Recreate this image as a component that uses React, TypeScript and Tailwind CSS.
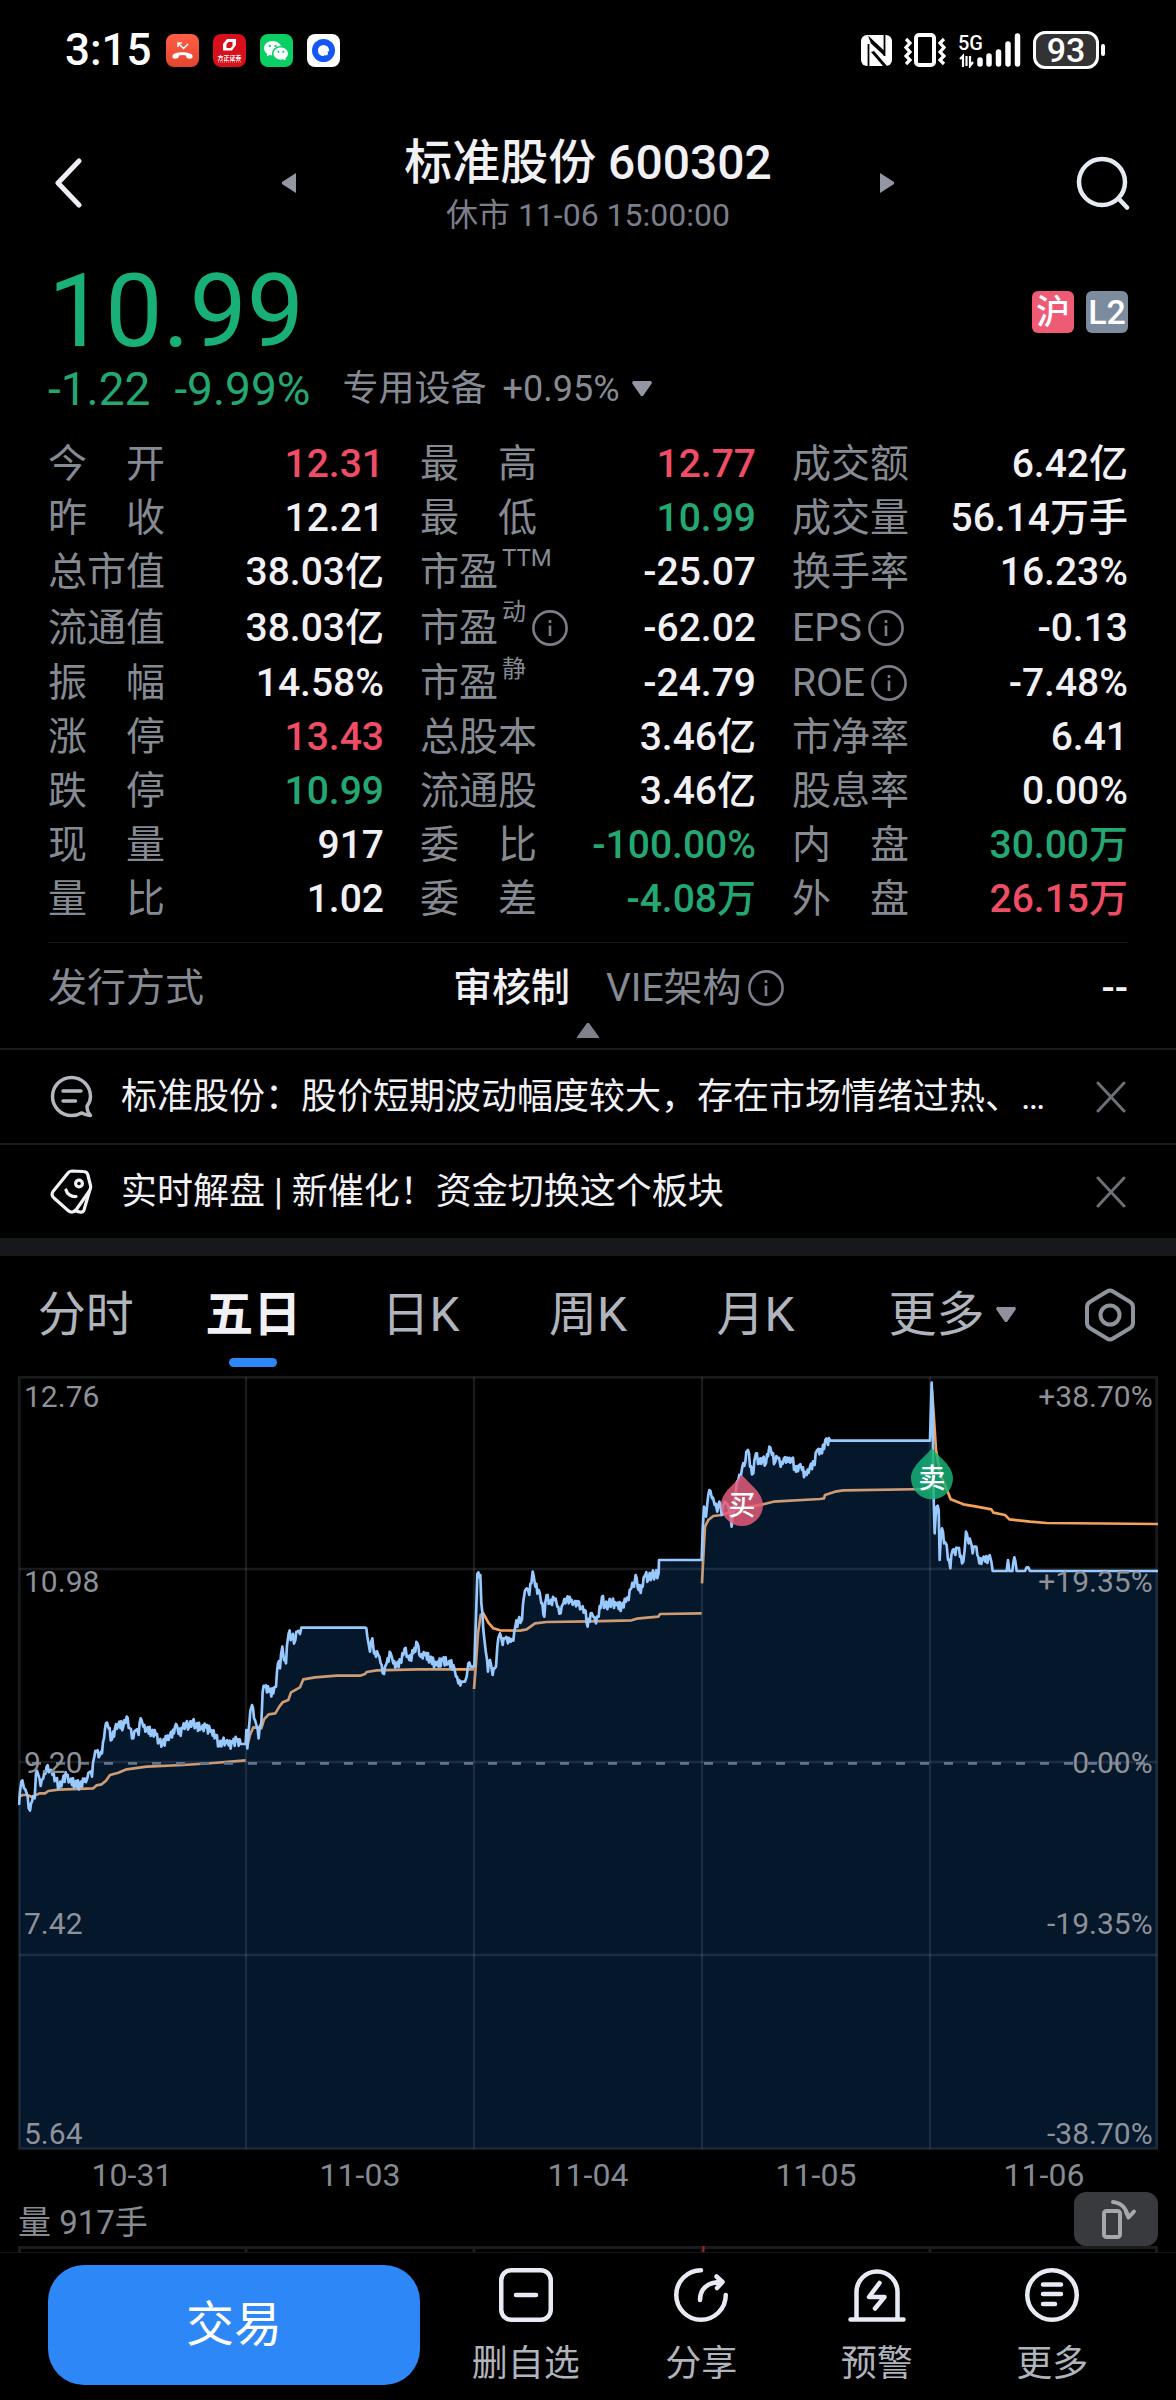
import type { ReactNode } from 'react';
import { BsWechat } from 'react-icons/bs';

type Tone = 'plain' | 'up' | 'down';

interface Quote {
  label: string;
  value: string;
  tone?: Tone;
  sup?: string;
  info?: boolean;
}

const toneClass: Record<Tone, string> = {
  plain: 'text-[#f0f0f5]',
  up: 'text-[#ee4d65]',
  down: 'text-[#24a873]',
};

// Three quotes per row
const quoteRows: Quote[][] = [
  [
    { label: '今　开', value: '12.31', tone: 'up' },
    { label: '最　高', value: '12.77', tone: 'up' },
    { label: '成交额', value: '6.42亿' },
  ],
  [
    { label: '昨　收', value: '12.21' },
    { label: '最　低', value: '10.99', tone: 'down' },
    { label: '成交量', value: '56.14万手' },
  ],
  [
    { label: '总市值', value: '38.03亿' },
    { label: '市盈', sup: 'TTM', value: '-25.07' },
    { label: '换手率', value: '16.23%' },
  ],
  [
    { label: '流通值', value: '38.03亿' },
    { label: '市盈', sup: '动', info: true, value: '-62.02' },
    { label: 'EPS', info: true, value: '-0.13' },
  ],
  [
    { label: '振　幅', value: '14.58%' },
    { label: '市盈', sup: '静', value: '-24.79' },
    { label: 'ROE', info: true, value: '-7.48%' },
  ],
  [
    { label: '涨　停', value: '13.43', tone: 'up' },
    { label: '总股本', value: '3.46亿' },
    { label: '市净率', value: '6.41' },
  ],
  [
    { label: '跌　停', value: '10.99', tone: 'down' },
    { label: '流通股', value: '3.46亿' },
    { label: '股息率', value: '0.00%' },
  ],
  [
    { label: '现　量', value: '917' },
    { label: '委　比', value: '-100.00%', tone: 'down' },
    { label: '内　盘', value: '30.00万', tone: 'down' },
  ],
  [
    { label: '量　比', value: '1.02' },
    { label: '委　差', value: '-4.08万', tone: 'down' },
    { label: '外　盘', value: '26.15万', tone: 'up' },
  ],
];

type Point = [number, number];

interface Segment {
  offset: number;
  points: Point[];
}

// Chart units: three per pixel at full width
const priceSegments: Segment[] = [
  {
    offset: 0,
    points: [
      [57, 1305], [64, 1235], [72, 1255], [80, 1270], [90, 1322], [96, 1295], [104, 1285], [108, 1210], [115, 1215],
      [122, 1248], [130, 1225], [140, 1190], [150, 1200], [158, 1215], [168, 1225], [178, 1252], [188, 1230], [200, 1218],
      [210, 1232], [225, 1240], [240, 1245], [252, 1235], [262, 1225], [270, 1205], [276, 1220], [283, 1160], [290, 1145],
      [300, 1155], [306, 1150], [312, 1105], [318, 1060], [326, 1075], [336, 1108], [345, 1075], [355, 1062], [370, 1068],
      [380, 1040], [390, 1075], [400, 1105], [408, 1080], [416, 1095], [422, 1045], [430, 1070], [440, 1078], [455, 1085],
      [468, 1095], [478, 1115], [488, 1120], [500, 1110], [510, 1095], [522, 1090], [528, 1062], [536, 1092], [548, 1075],
      [558, 1060], [568, 1070], [578, 1052], [588, 1068], [605, 1075], [618, 1072], [632, 1085], [648, 1095], [658, 1128],
      [668, 1112], [678, 1115], [686, 1126], [698, 1118], [710, 1113], [722, 1122], [737, 1122], [739, 1080], [742, 1135],
      [748, 1060], [756, 1005], [762, 1045], [770, 1068], [776, 1105], [784, 1060], [788, 965], [795, 950], [808, 965],
      [820, 970], [828, 950], [834, 880], [840, 895], [847, 830], [852, 870], [858, 880], [866, 790], [876, 800],
      [886, 810], [892, 785], [900, 792], [904, 773], [1096, 773], [1102, 800], [1110, 845], [1117, 805], [1122, 850],
      [1135, 855], [1142, 880], [1152, 912], [1160, 880], [1172, 850], [1180, 880], [1190, 885], [1204, 878], [1214, 835],
      [1220, 860], [1228, 870], [1240, 850], [1252, 820], [1262, 860], [1275, 855], [1290, 865], [1310, 885], [1328, 870],
      [1345, 880], [1360, 885], [1368, 920], [1375, 940], [1385, 935], [1395, 935], [1400, 920], [1405, 880], [1412, 890],
      [1422, 890],
    ],
  },
  {
    offset: 1320,
    points: [
      [103, 885], [108, 740], [112, 612], [121, 615], [124, 700], [130, 780], [138, 850], [144, 905], [150, 870],
      [158, 915], [164, 895], [168, 890], [172, 830], [180, 790], [188, 825], [196, 805], [204, 820], [212, 815],
      [220, 812], [226, 770], [235, 750], [246, 748], [252, 680], [260, 655], [268, 675], [278, 605], [286, 650],
      [296, 660], [304, 700], [313, 740], [320, 675], [330, 700], [344, 690], [352, 710], [362, 730], [370, 700],
      [380, 685], [392, 695], [402, 697], [414, 705], [425, 715], [434, 720], [443, 770], [452, 730], [460, 740],
      [468, 760], [476, 740], [486, 680], [496, 710], [506, 700], [516, 695], [530, 705], [545, 710], [558, 695],
      [566, 690], [574, 655], [582, 650], [587, 615], [596, 660], [608, 650], [616, 615], [626, 625], [636, 612],
      [646, 615], [656, 608], [657, 570], [785, 570], [788, 480], [792, 410], [798, 440], [802, 400], [808, 360],
      [816, 385], [824, 405], [832, 425], [838, 395], [845, 435], [852, 400], [860, 402], [868, 420], [875, 470],
      [882, 420], [888, 360], [895, 330], [903, 315], [907, 290], [916, 275], [924, 240], [930, 290], [940, 310],
      [948, 250], [958, 280], [968, 265], [978, 280], [988, 230], [996, 255], [1006, 275], [1014, 265], [1022, 290],
      [1032, 265], [1045, 275], [1056, 265], [1068, 305], [1078, 285], [1086, 300], [1100, 315], [1110, 290], [1124, 285],
      [1132, 240], [1146, 250], [1156, 210], [1164, 225], [1170, 212], [1470, 212],
    ],
  },
  {
    offset: 2340,
    points: [
      [455, 38], [458, 120], [460, 350], [464, 490], [470, 410], [476, 420], [479, 570], [486, 475], [492, 520],
      [500, 525], [504, 570], [511, 595], [518, 540], [526, 555], [534, 535], [540, 560], [550, 575], [554, 540],
      [558, 485], [566, 520], [572, 515], [578, 550], [586, 530], [592, 555], [598, 580], [608, 565], [616, 575],
      [626, 560], [634, 575], [638, 603], [680, 603], [684, 570], [688, 603], [697, 603], [703, 562], [710, 603],
      [735, 603], [740, 592], [745, 592], [750, 603], [1134, 603],
    ],
  },
];

const averageSegments: Segment[] = [
  {
    offset: 0,
    points: [
      [57, 1280], [68, 1275], [82, 1275], [98, 1282], [108, 1275], [120, 1270], [135, 1270], [145, 1263], [175, 1259],
      [280, 1255], [290, 1246], [305, 1243], [318, 1232], [330, 1215], [355, 1208], [380, 1198], [440, 1190], [550, 1185],
      [640, 1179], [737, 1171],
    ],
  },
  {
    offset: 0,
    points: [
      [742, 1128], [750, 1095], [760, 1072], [784, 1075], [792, 1048], [806, 1033], [826, 1030], [838, 1010], [848, 997],
      [865, 990], [873, 967], [900, 952], [910, 928], [945, 922], [1010, 917], [1080, 917], [1095, 912], [1100, 906],
      [1130, 901], [1250, 898], [1422, 898],
    ],
  },
  {
    offset: 1320,
    points: [
      [102, 957], [108, 880], [114, 790], [122, 735], [130, 730], [145, 758], [160, 775], [180, 781], [240, 782],
      [260, 778], [285, 760], [320, 756], [450, 754], [575, 751], [590, 746], [655, 740], [660, 732], [785, 730],
    ],
  },
  {
    offset: 1320,
    points: [
      [786, 640], [790, 560], [795, 470], [805, 450], [820, 438], [845, 435], [905, 415], [970, 403], [1000, 395],
      [1140, 387], [1152, 385], [1155, 375], [1185, 365], [1210, 361], [1470, 357],
    ],
  },
  {
    offset: 2340,
    points: [
      [456, 60], [461, 130], [468, 240], [480, 310], [503, 365], [512, 388], [550, 403], [590, 410], [634, 418],
      [640, 428], [675, 435], [688, 448], [750, 455], [800, 459], [1134, 462],
    ],
  },
];

function shift({ offset, points }: Segment): Point[] {
  return points.map(([x, y]) => [x + offset, y]);
}

function toPath(points: Point[]) {
  return points.map(([x, y], i) => `${i === 0 ? 'M' : 'L'}${x} ${y}`).join(' ');
}

function withTicks(points: Point[]): Point[] {
  const result: Point[] = [];
  points.forEach((point, i) => {
    const prev = points[i - 1];
    if (prev && prev[1] !== point[1] && point[0] - prev[0] > 5) {
      const steps = Math.floor((point[0] - prev[0]) / 3);
      for (let s = 1; s < steps; s++) {
        const x = prev[0] + s * 3;
        const y = prev[1] + ((point[1] - prev[1]) * s) / steps;
        const swing = 6 + (Math.round(x * 7) % 5) * 2;
        result.push([x, Math.min(y + (s % 2 === 0 ? swing : -swing), 1330)]);
      }
    }
    result.push(point);
  });
  return result;
}

const priceLine = toPath(withTicks(priceSegments.flatMap(shift)));

const priceLabels = [
  { price: '12.76', percent: '+38.70%', y: 111 },
  { price: '10.98', percent: '+19.35%', y: 666 },
  { price: '9.20', percent: '0.00%', y: 1208 },
  { price: '7.42', percent: '-19.35%', y: 1692 },
  { price: '5.64', percent: '-38.70%', y: 2322 },
];

function InfoIcon() {
  return (
    <svg viewBox="0 0 36 36" className="ml-[6px] h-9 w-9 shrink-0" fill="none" stroke="#7b7e88" strokeWidth="2.6">
      <circle cx="18" cy="18" r="16.6" />
      <path d="M18 15.5V26" />
      <path d="M18 10v3" />
    </svg>
  );
}

function StatusBar() {
  return (
    <div className="flex h-[100px] items-center justify-between pl-[65px] pr-[71px]">
      <div className="flex items-center gap-[14px]">
        <span className="text-[44px] font-medium leading-[48px] text-white">3:15</span>
        <svg viewBox="0 0 33 33" className="h-[33px] w-[33px]">
          <defs>
            <linearGradient id="call" x1="0" y1="0" x2="0" y2="1">
              <stop offset="0" stopColor="#ff5f45" />
              <stop offset="1" stopColor="#e2452d" />
            </linearGradient>
          </defs>
          <rect width="33" height="33" rx="8" fill="url(#call)" />
          <path d="M6.5 22c0-5 20-5 20 0v1.6c0 1.6-5.6 1.4-6 0l-.4-2c-2-.8-5.2-.8-7.2 0l-.4 2c-.4 1.4-6 1.6-6 0z" fill="#fff" />
          <path d="M12 13V9h4M12.5 9.5l5 5 4.5-4.5" fill="none" stroke="#fff" strokeWidth="1.5" />
        </svg>
        <svg viewBox="0 0 33 33" className="h-[33px] w-[33px]">
          <rect width="33" height="33" rx="8" fill="#d7101c" />
          <path d="M14 5h9v6l-4 5.5h-9V10z" fill="#fff" />
          <path d="M15.500 8h4v4l-2 2h-4v-4z" fill="#d7101c" />
          <text x="16.5" y="25.5" textAnchor="middle" fontSize="6" fontWeight="700" fill="#fff">方正证券</text>
          <path d="M5 28h23" stroke="#fff" strokeWidth="1" strokeDasharray="1 1" opacity=".7" />
        </svg>
        <span className="flex h-[33px] w-[33px] items-center justify-center rounded-lg bg-[#09cf64] text-white">
          <BsWechat className="h-6 w-6" />
        </span>
        <svg viewBox="0 0 33 33" className="h-[33px] w-[33px]">
          <rect width="33" height="33" rx="8" fill="#fff" />
          <circle cx="16.5" cy="16.5" r="11.5" fill="#1557f5" />
          <circle cx="16.5" cy="16.5" r="5.6" fill="#fff" />
          <path d="M17 17.5h5.500V22H17z" fill="#1557f5" />
          <circle cx="18.5" cy="19" r="2.5" fill="#fff" />
        </svg>
      </div>
      <div className="flex items-center gap-3">
        <svg viewBox="0 0 31 33" className="h-[33px] w-[31px]">
          <rect x="0" y="1" width="31" height="31" rx="6" fill="#fff" />
          <path d="M7.5 10v22M23.5 1v21" stroke="#000" strokeWidth="1.8" />
          <path d="M7 1.500L23.500 17v5L10 9.500zM10 18l3-1 13 15h-4z" fill="#000" />
        </svg>
        <svg viewBox="0 0 42 34" className="h-[34px] w-[42px]" fill="none" stroke="#fff">
          <rect x="12" y="2" width="18" height="30" rx="3" strokeWidth="4" />
          <path d="M2 6l4 4-4 4.500 4 4.500-4 4 4 4-4 4M40 6l-4 4 4 4.500-4 4.500 4 4-4 4 4 4" strokeWidth="3.2" />
        </svg>
        <svg viewBox="0 0 63 36" className="h-9 w-[63px]">
          <text x="0" y="18" fontSize="20" fontWeight="500" fill="#fff">5G</text>
          <path d="M2 27l3-3v11M8.5 24v10M12 24v10l3-4" fill="none" stroke="#fff" strokeWidth="2.2" />
          <path d="M22 28v4M31 24v8M40.500 20v12M50 12v20M59.500 4v28" stroke="#fff" strokeWidth="5.5" strokeLinecap="round" />
        </svg>
        <div className="flex items-center gap-0.5">
          <span className="flex h-[38px] w-[66px] items-center justify-center rounded-xl border-[3px] border-white bg-[#333] text-[34px] font-medium leading-8 text-white">
            93
          </span>
          <span className="h-3 w-1 rounded-sm bg-white" />
        </div>
      </div>
    </div>
  );
}

function Header() {
  return (
    <header className="mt-[33px] flex h-[100px] items-center px-[46px]">
      <div className="flex flex-1 items-center justify-between">
        <button type="button" aria-label="返回" className="ml-2 cursor-pointer">
          <svg viewBox="0 0 28 50" className="h-[50px] w-7" fill="none" stroke="#eeeef4" strokeWidth="5" strokeLinecap="round" strokeLinejoin="round">
            <path d="M25 3L4 25l21 22" />
          </svg>
        </button>
        <button type="button" aria-label="上一只" className="mr-[108px] cursor-pointer">
          <svg viewBox="0 0 14 22" className="h-[22px] w-[14px]">
            <path d="M14 1v20L0 12v-2z" fill="#9497a3" />
          </svg>
        </button>
      </div>
      <div className="text-center">
        <h1 className="text-[48px] font-medium leading-[60px] text-[#f0f0f5]">标准股份 600302</h1>
        <p className="mt-1 text-[32px] leading-9 text-[#7c7f8b]">休市 11-06 15:00:00</p>
      </div>
      <div className="flex flex-1 items-center justify-between">
        <button type="button" aria-label="下一只" className="ml-[108px] cursor-pointer">
          <svg viewBox="0 0 14 22" className="h-[22px] w-[14px]">
            <path d="M0 1v20l14-9v-2z" fill="#9497a3" />
          </svg>
        </button>
        <button type="button" aria-label="搜索" className="cursor-pointer">
          <svg viewBox="0 0 54 54" className="h-[54px] w-[54px]" fill="none" stroke="#e6eaf2" strokeWidth="4.5" strokeLinecap="round">
            <circle cx="26" cy="26" r="23" />
            <path d="M42.500 42.500l8.500 9" />
          </svg>
        </button>
      </div>
    </header>
  );
}

function QuoteCell({ quote, tall }: { quote: Quote; tall: boolean }) {
  return (
    <div className={`flex items-center justify-between ${tall ? 'h-[57px]' : 'h-[54px]'}`}>
      <dt className="flex h-full items-center text-[#868a92]">
        {quote.label}
        {quote.sup && <span className="ml-1 self-start text-[24px] leading-[26px]">{quote.sup}</span>}
        {quote.info && <InfoIcon />}
      </dt>
      <dd className={`font-medium ${toneClass[quote.tone ?? 'plain']}`}>{quote.value}</dd>
    </div>
  );
}

function Summary() {
  return (
    <section className="px-12">
      <div className="mt-7 flex items-end justify-between">
        <p className="text-[102px] leading-[100px] text-[#18b076]">10.99</p>
        <div className="flex gap-3 pb-7">
          <span className="flex h-[42px] w-[42px] items-center justify-center rounded-md bg-[#ef5b75] text-[34px] font-medium leading-none text-white">沪</span>
          <span className="flex h-[42px] w-[42px] items-center justify-center rounded-md bg-[#7c8b9e] text-[34px] font-medium leading-none text-white">L2</span>
        </div>
      </div>
      <div className="mt-1 flex h-12 items-center text-[46px] text-[#24a873]">
        <span>-1.22</span>
        <span className="ml-6">-9.99%</span>
        <button type="button" className="ml-8 flex cursor-pointer items-center text-[36px] text-[#868a92]">
          <span>专用设备</span>
          <span className="ml-4">+0.95%</span>
          <svg viewBox="0 0 20 16" className="ml-3 h-4 w-5">
            <path d="M1 0h18l1 2-9 13h-2L0 2z" fill="#9497a3" />
          </svg>
        </button>
      </div>

      <dl className="mt-6 grid grid-cols-3 gap-x-9 text-[39px] leading-[54px]">
        {quoteRows.map(row => row.map(q => <QuoteCell key={q.label + (q.sup ?? '')} quote={q} tall={row[0].label === '流通值'} />))}
      </dl>

      <dl className="mt-4 grid grid-cols-2 gap-x-9 border-t border-[#1b1b1e] pt-[18px] text-[39px] leading-[54px]">
        <QuoteCell quote={{ label: '发行方式', value: '审核制' }} tall={false} />
        <QuoteCell quote={{ label: 'VIE架构', info: true, value: '--' }} tall={false} />
      </dl>
      <button type="button" aria-label="收起" className="mx-auto mb-[10px] mt-2 block cursor-pointer">
        <svg viewBox="0 0 22 15" className="h-[15px] w-[22px]">
          <path d="M10 0h2l10 14v1H0v-1z" fill="#7f828d" />
        </svg>
      </button>
    </section>
  );
}

function NoticeRow({ icon, text }: { icon: ReactNode; text: string }) {
  return (
    <div className="flex h-[95px] items-center border-t-2 border-[#1a1b1d] pl-[50px] pr-[50px]">
      {icon}
      <a href="#notice" className="ml-7 flex-1 whitespace-nowrap text-[36px] leading-[48px] text-[#f0f0f5]">
        {text}
      </a>
      <button type="button" aria-label="关闭" className="cursor-pointer">
        <svg viewBox="0 0 30 32" className="h-8 w-[30px]" fill="none" stroke="#6c6e78" strokeWidth="3" strokeLinecap="round">
          <path d="M2 2l26 28M28 2L2 30" />
        </svg>
      </button>
    </div>
  );
}

function Notices() {
  return (
    <section className="border-b-[18px] border-[#17181c]">
      <NoticeRow
        text="标准股份：股价短期波动幅度较大，存在市场情绪过热、…"
        icon={
          <svg viewBox="0 0 43 43" className="h-[43px] w-[43px] shrink-0" fill="none" stroke="#b3b7bf" strokeWidth="3.5" strokeLinecap="round" strokeLinejoin="round">
            <path d="M37 31c2.500-3 3.500-6.500 3.500-9.500a19 19 0 1 0-19 19c4 0 7-.8 10-2.500 3 1 6 2.500 9 2.500-2-2-3.500-6-3.500-9.500z" />
            <path d="M13 16h18M13 26h12.500" />
          </svg>
        }
      />
      <NoticeRow
        text="实时解盘 | 新催化！资金切换这个板块"
        icon={
          <svg viewBox="0 0 43 45" className="h-[45px] w-[43px] shrink-0" fill="none" stroke="#f0f0f5" strokeWidth="3.2" strokeLinecap="round" strokeLinejoin="round">
            <path d="M18 4c1-1.500 2-2 4-2l11 .5c3 0 4.500 1 5 4l2.500 10c.5 2.500 0 4-1.500 6L26 41c-3 3-5.500 3-8.500 0L4 29c-2.500-2-2.500-4-1-6.500z" />
            <circle cx="29" cy="14.5" r="3.4" />
            <path d="M16 21c1 4 5 7 10 6.500" />
            <path d="M39.500 22l-5.500 19c-.8 2.500-4 3-9 .5" />
          </svg>
        }
      />
    </section>
  );
}

function PeriodTab({ label, active = false }: { label: string; active?: boolean }) {
  return (
    <button type="button" role="tab" aria-selected={active} className="flex cursor-pointer flex-col items-center">
      <span className={`leading-[60px] ${active ? 'font-bold text-[#f0f0f5]' : 'text-[#b0b4bc]'}`}>{label}</span>
      {active && <span className="mt-[13px] h-[9px] w-12 rounded-full bg-[#2d87f7]" />}
    </button>
  );
}

function PeriodTabs() {
  return (
    <div role="tablist" className="grid h-[120px] grid-cols-[167fr_167fr_167fr_167fr_167fr_226fr_88fr] items-start pl-0.5 pr-[22px] pt-[29px] text-[48px]">
      <PeriodTab label="分时" />
      <PeriodTab label="五日" active />
      <PeriodTab label="日K" />
      <PeriodTab label="周K" />
      <PeriodTab label="月K" />
      <button type="button" className="flex cursor-pointer items-center justify-center leading-[60px] text-[#b0b4bc]">
        更多
        <svg viewBox="0 0 20 16" className="ml-3 h-4 w-5">
          <path d="M1 0h18l1 2-9 13h-2L0 2z" fill="#8f929c" />
        </svg>
      </button>
      <button type="button" aria-label="图表设置" className="flex h-[60px] cursor-pointer items-center justify-center">
        <svg viewBox="0 0 50 54" className="h-[54px] w-[50px]" fill="none" stroke="#8f939c" strokeWidth="4" strokeLinejoin="round">
          <path d="M22 3.500q3-2 6 0l16.500 10q3.500 2 3.500 5.500v16q0 3.500-3.500 5.500L28 50.500q-3 2-6 0L5.500 40.500Q2 38.500 2 35V19q0-3.500 3.500-5.500z" />
          <circle cx="25" cy="27" r="9.5" />
        </svg>
      </button>
    </div>
  );
}

function TradeMark({ x, y, label, fill }: { x: number; y: number; label: string; fill: string }) {
  return (
    <g transform={`translate(${x} ${y})`}>
      <path d="M0-89C22-62 63-36 63 1A63 63 0 0 1-63 1C-63-36-22-62 0-89z" fill={fill} fillOpacity=".84" />
      <text y="30" textAnchor="middle" fontSize="81" fontWeight="500" fill="#fff">
        {label}
      </text>
    </g>
  );
}

function PriceChart() {
  return (
    <svg viewBox="54 18 3420 2322" className="block w-full" role="img" aria-label="五日走势">
      {averageSegments.map((segment, i) => (
        <path key={i} d={toPath(shift(segment))} fill="none" stroke="#f5a15a" strokeWidth="8" strokeLinejoin="round" />
      ))}
      <path d={`${priceLine} V2336 H57 Z`} fill="#1c80ef" fillOpacity=".18" />
      <g fill="none" stroke="#9aa4b4" strokeOpacity=".16">
        <rect x="58" y="22" width="3412" height="2314" strokeWidth="8" />
        <path d="M738 22V2336M1422 22V2336M2106 22V2336M2790 22V2336" strokeWidth="7" />
        <path d="M58 597H3470M58 1176H3470M58 1755H3470" strokeWidth="7" />
      </g>
      <path d="M96 1180H3440" stroke="#64748b" strokeWidth="8" strokeDasharray="27 45" />
      <path d={priceLine} fill="none" stroke="#99caff" strokeWidth="8" strokeLinejoin="round" />
      <g fontSize="90" fill="#8e9199">
        {priceLabels.map(l => (
          <g key={l.price}>
            <text x="72" y={l.y}>{l.price}</text>
            <text x="3458" y={l.y} textAnchor="end">{l.percent}</text>
          </g>
        ))}
      </g>
      <TradeMark x={2226} y={404} label="买" fill="#e65c79" />
      <TradeMark x={2796} y={324} label="卖" fill="#18b377" />
    </svg>
  );
}

function ChartPanel() {
  return (
    <section className="px-[18px]">
      <PriceChart />
      <div className="grid h-[50px] grid-cols-5 items-center text-center text-[32px] leading-9 text-[#868a92]">
        <span>10-31</span>
        <span>11-03</span>
        <span>11-04</span>
        <span>11-05</span>
        <span>11-06</span>
      </div>
      <div className="flex h-[46px] items-end justify-between">
        <p className="text-[33px] leading-[46px] text-[#868a92]">量 917手</p>
        <button type="button" aria-label="横屏" className="h-[54px] w-[84px] cursor-pointer rounded-xl bg-[#393a3e]">
          <svg viewBox="0 0 84 54" className="h-full w-full" fill="none" stroke="#a6a8ad" strokeWidth="4" strokeLinecap="round" strokeLinejoin="round">
            <rect x="30" y="19" width="16" height="26" rx="2.5" />
            <path d="M39 10c9 1 13 6 15.500 15.500M52 20l2.500 5.500 5.500-6" />
          </svg>
        </button>
      </div>
      {/* Volume pane, cut off by the action bar */}
      <svg viewBox="0 0 1140 6" className="block w-full" fill="none" stroke="#1b1c1f" strokeWidth="3">
        <path d="M0 1.500H1140M1.500 0V6M228 0V6M456 0V6M684 0V6M912 0V6M1138.500 0V6" />
        <path d="M685.500 0V6" stroke="#a3222f" strokeWidth="2" />
      </svg>
    </section>
  );
}

function ActionItem({ label, children }: { label: string; children: ReactNode }) {
  return (
    <button type="button" className="flex cursor-pointer flex-col items-center pt-[3px]">
      <svg viewBox="0 0 58 54" className="h-[54px] w-[58px]" fill="none" stroke="#e8ebf3" strokeWidth="4.5" strokeLinecap="round" strokeLinejoin="round">
        {children}
      </svg>
      <span className="mt-[18px] text-[36px] leading-[48px] text-[#b0b4bc]">{label}</span>
    </button>
  );
}

function ActionBar() {
  return (
    <nav className="flex border-t border-[#161618] pb-3 pl-12 pr-9 pt-3">
      <button type="button" className="h-[120px] w-[372px] cursor-pointer rounded-[36px] bg-[#2d87f7] text-[48px] text-white">
        交易
      </button>
      <div className="ml-[18px] grid flex-1 grid-cols-4 items-start">
        <ActionItem label="删自选">
          <rect x="4.25" y="2.25" width="49.5" height="49.5" rx="10" />
          <path d="M19 27h20" />
        </ActionItem>
        <ActionItem label="分享">
          <path d="M29 2.250A24.750 24.750 0 1 0 53.750 27" />
          <path d="M28 32c0-11 7-18 22-18M44.500 8.500l6 5.500-5.500 6" />
        </ActionItem>
        <ActionItem label="预警">
          <path d="M2.500 51.500h53M8.500 51.500V24a20.500 20.500 0 0 1 41 0v27.500" />
          <path d="M31.500 15l-10.500 14h15.500L27 40.500" />
        </ActionItem>
        <ActionItem label="更多">
          <circle cx="29" cy="27" r="24.75" />
          <path d="M20 16.500h18M20 26h18M20 36h12" />
        </ActionItem>
      </div>
    </nav>
  );
}

export default function App() {
  return (
    <div className="min-h-screen bg-black font-['Roboto','Noto_Sans_CJK_SC',sans-serif]">
      <StatusBar />
      <Header />
      <Summary />
      <Notices />
      <PeriodTabs />
      <ChartPanel />
      <ActionBar />
    </div>
  );
}
